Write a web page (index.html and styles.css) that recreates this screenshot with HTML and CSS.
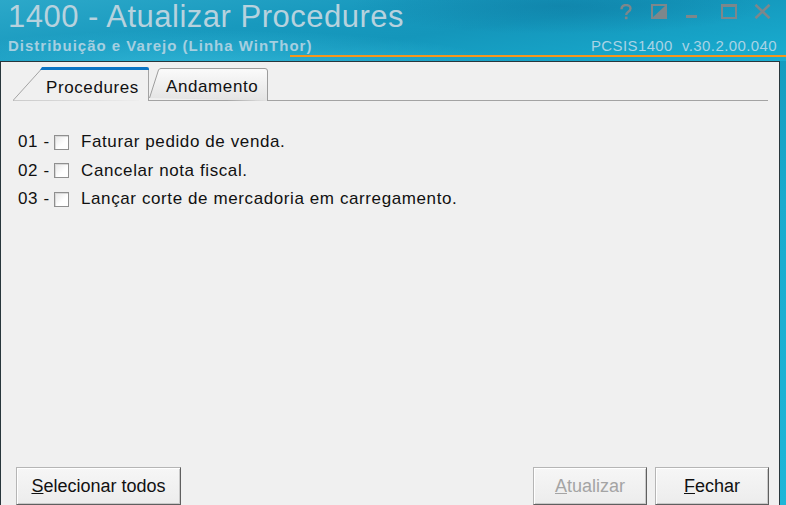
FILE: index.html
```html
<!DOCTYPE html>
<html lang="pt-BR">
<head>
<meta charset="utf-8">
<title>1400 - Atualizar Procedures</title>
<link rel="stylesheet" href="styles.css">
</head>
<body>
<div class="window">
  <header class="titlebar">
    <div class="title-row">
      <h1 class="title">1400 - Atualizar Procedures</h1>
      <div class="win-icons">
        <svg class="ic ic-help" width="14" height="16" viewBox="0 0 14 16"><path d="M2.5 5.2 C2.5 2.2 4.6 1 7 1 C9.6 1 11.5 2.4 11.5 4.6 C11.5 6.6 10 7.4 8.8 8.2 C7.6 9 7.2 9.6 7.2 11" fill="none" stroke="#7d878b" stroke-width="2.4"/><rect x="5.9" y="12.6" width="2.6" height="2.6" fill="#7d878b"/></svg>
        <svg class="ic ic-sq" width="16" height="15" viewBox="0 0 16 15"><rect x="1" y="1" width="14" height="13" fill="none" stroke="#7d878b" stroke-width="2"/><polygon points="15,1 15,14 1,14" fill="#7d878b"/></svg>
        <svg class="ic ic-min" width="11" height="15" viewBox="0 0 11 15"><rect x="0" y="11" width="11" height="3" fill="#7d878b"/></svg>
        <svg class="ic ic-max" width="16" height="15" viewBox="0 0 16 15"><rect x="1" y="1.5" width="14" height="12.5" fill="none" stroke="#7d878b" stroke-width="2"/><rect x="0" y="0" width="16" height="3" fill="#7d878b"/></svg>
        <svg class="ic ic-close" width="17" height="15" viewBox="0 0 17 15"><path d="M1.5 0.8 L15.5 14.2 M15.5 0.8 L1.5 14.2" stroke="#7d878b" stroke-width="2.6"/></svg>
      </div>
    </div>
    <div class="sub-row">
      <span class="subtitle">Distribuição e Varejo (Linha WinThor)</span>
      <span class="version">PCSIS1400  v.30.2.00.040</span>
    </div>
    <div class="accent"></div>
  </header>

  <main class="panel">
    <nav class="tabs">
      <div class="tab tab-active">
        <svg class="tab-shape" width="137" height="34" viewBox="0 0 137 34"><path d="M0 33.5 L28 2.5 L135.5 2.5 L135.5 34" fill="#f0f0f0" stroke="#a3a3a3" stroke-width="1"/><path d="M29 0 L134 0 Q136 0 136 2 L136 3 L27 3 Z" fill="#0a74c4"/></svg>
        <span class="tab-label">Procedures</span>
      </div>
      <div class="tab tab-idle">
        <svg class="tab-shape" width="120" height="33" viewBox="0 0 120 33"><defs><linearGradient id="tg" x1="0" y1="0" x2="0" y2="1"><stop offset="0" stop-color="#fbfbfb"/><stop offset="1" stop-color="#e3e3e3"/></linearGradient></defs><path d="M0.5 30 L9.5 2 Q10.3 0.5 12 0.5 L116 0.5 Q118.5 0.5 118.5 3 L118.5 33" fill="url(#tg)" stroke="#9c9c9c" stroke-width="1"/></svg>
        <span class="tab-label">Andamento</span>
      </div>
    </nav>

    <ul class="procs">
      <li class="proc"><span class="num">01 -</span><span class="check"></span><span class="proc-label">Faturar pedido de venda.</span></li>
      <li class="proc"><span class="num">02 -</span><span class="check"></span><span class="proc-label">Cancelar nota fiscal.</span></li>
      <li class="proc"><span class="num">03 -</span><span class="check"></span><span class="proc-label">Lançar corte de mercadoria em carregamento.</span></li>
    </ul>

    <div class="actions">
      <button class="btn btn-sel"><u>S</u>elecionar todos</button>
      <div class="actions-right">
        <button class="btn btn-upd" disabled><u>A</u>tualizar</button>
        <button class="btn btn-close"><u>F</u>echar</button>
      </div>
    </div>
  </main>
</div>
</body>
</html>
```

FILE: styles.css
```css
html, body {
  margin: 0;
  padding: 0;
}
body {
  width: 786px;
  height: 505px;
  overflow: hidden;
  background: linear-gradient(180deg, #1295b9 0%, #19abce 40%, #1eb6d8 100%);
  font-family: "Liberation Sans", Arial, sans-serif;
}
.window {
  width: 786px;
  height: 505px;
  display: flex;
  flex-direction: column;
}

/* ---------- title bar ---------- */
.titlebar {
  position: relative;
  height: 61px;
  flex: none;
  background:
    radial-gradient(ellipse 460px 60px at 200px 72px, rgba(70, 205, 235, 0.6), rgba(70, 205, 235, 0) 70%),
    radial-gradient(ellipse 300px 40px at 560px 6px, rgba(10, 110, 150, 0.4), rgba(10, 110, 150, 0) 70%),
    linear-gradient(172deg, #2ca8c9 0%, #1899be 35%, #1496bb 55%, #19aed1 100%);
}
.title-row {
  display: flex;
  justify-content: space-between;
  height: 34px;
}
.title {
  margin: 0 0 0 8px;
  font-size: 31px;
  line-height: 34px;
  font-weight: normal;
  letter-spacing: 0.5px;
  color: #b7d2de;
  white-space: nowrap;
}
.win-icons {
  display: flex;
  align-items: flex-start;
  padding: 4px 15px 0 0;
}
.ic { display: block; }
.ic-sq { margin-left: 18px; }
.ic-min { margin-left: 19px; }
.ic-max { margin-left: 24px; }
.ic-close { margin-left: 17px; }

.sub-row {
  display: flex;
  justify-content: space-between;
  margin-top: 3px;
  line-height: 18px;
  font-size: 15px;
}
.subtitle {
  margin-left: 8px;
  font-weight: bold;
  letter-spacing: 1px;
  color: #a6cfe0;
}
.version {
  margin-right: 9px;
  white-space: pre;
  letter-spacing: 0.4px;
  color: #a9d3e5;
}
.accent {
  position: absolute;
  left: 290px;
  right: 0;
  top: 55px;
  height: 2px;
  background: #f5961c;
}

/* ---------- panel ---------- */
.panel {
  width: 778px;
  height: 450px;
  flex: none;
  background: #f0f0f0;
  border: 1px solid #28363c;
  display: flex;
  flex-direction: column;
  color: #111;
  font-size: 17px;
  letter-spacing: 0.6px;
}
.tabs {
  display: flex;
  align-items: flex-end;
  margin: 5px 11px 0 12px;
  height: 33px;
  border-bottom: 1px solid #a3a3a3;
}
.tab {
  position: relative;
  box-sizing: border-box;
  display: flex;
  align-items: center;
}
.tab-shape {
  position: absolute;
  left: 0;
  top: 0;
}
.tab-label {
  position: relative;
}
.tab-active {
  width: 136px;
  height: 34px;
  margin-bottom: -1px;
  padding: 7px 0 0 33px;
}
.tab-idle {
  width: 120px;
  height: 32px;
  padding: 6px 0 0 17px;
}

.procs {
  list-style: none;
  margin: 27px 0 0 0;
  padding: 0 0 0 17px;
}
.proc {
  display: flex;
  align-items: center;
  height: 28.5px;
}
.num {
  width: 36px;
  white-space: nowrap;
}
.check {
  box-sizing: border-box;
  width: 15px;
  height: 15px;
  border: 1px solid #8f8f8f;
  background: linear-gradient(135deg, #e6e6e6 0%, #ffffff 60%);
  box-shadow: inset 1px 1px 0 #d8d8d8;
  margin-right: 12px;
}

.actions {
  margin-top: auto;
  display: flex;
  justify-content: space-between;
  padding: 0 10px 7px 15px;
}
.actions-right {
  display: flex;
  gap: 8px;
}
.btn {
  box-sizing: border-box;
  height: 38px;
  padding: 0;
  font-family: "Liberation Sans", Arial, sans-serif;
  font-size: 18px;
  letter-spacing: 0;
  color: #111;
  background: linear-gradient(180deg, #f6f6f6 0%, #ececec 100%);
  border: 1px solid #b5b5b5;
  border-right-color: #5f5f5f;
  border-bottom-color: #5f5f5f;
  box-shadow: inset 1px 1px 0 #ffffff, inset -1px -1px 0 #c9c9c9;
}
.btn-sel { width: 165px; }
.btn-upd, .btn-close { width: 114px; }
.btn-upd { color: #a4a4a4; }
```
